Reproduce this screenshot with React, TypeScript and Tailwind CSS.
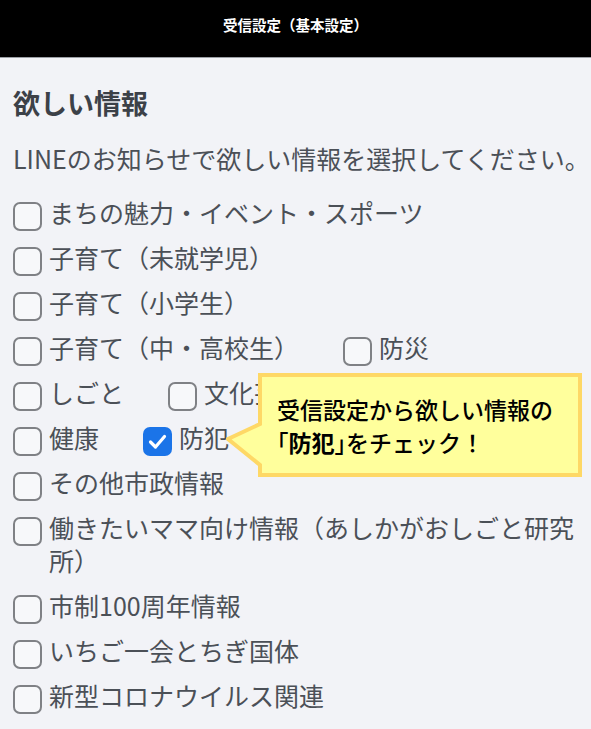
import type { ReactNode } from "react";

interface OptionProps {
  label: ReactNode;
  checked?: boolean;
  className?: string;
}

function Box({ checked }: { checked?: boolean }) {
  if (checked) {
    return (
      <span className="mb-[-2px] mt-[6px] flex h-[29px] w-[29px] shrink-0 items-center justify-center rounded-[7px] bg-[#1b74e8]">
        <svg width="29" height="29" viewBox="0 0 29 29">
          <path d="M7.5 15 L12.5 20 L21.5 9.5" fill="none" stroke="#fff" strokeWidth="3.2" strokeLinecap="round" strokeLinejoin="round" />
        </svg>
      </span>
    );
  }
  return <span className="mb-[-2px] mt-[6px] block h-[29px] w-[29px] shrink-0 rounded-[7px] border-[2.5px] border-[#7f8185] bg-[#f7f8fa]"></span>;
}

function Option({ label, checked, className }: OptionProps) {
  return (
    <label className={`flex items-start gap-[7px] ${className ?? ""}`}>
      <Box checked={checked} />
      <span className="text-[25px] leading-[33px] text-[#4b5057]">{label}</span>
    </label>
  );
}

// rows as they wrap on the phone screen
const rows: OptionProps[][] = [
  [{ label: "まちの魅力・イベント・スポーツ" }],
  [{ label: "子育て（未就学児）" }],
  [{ label: "子育て（小学生）" }],
  [{ label: "子育て（中・高校生）", className: "w-[330px]" }, { label: "防災" }],
  [{ label: "しごと", className: "w-[155px]" }, { label: "文化芸術" }],
  [{ label: "健康", className: "w-[130px]" }, { label: "防犯", checked: true }],
  [{ label: "その他市政情報" }],
  [{ label: "働きたいママ向け情報（あしかがおしごと研究所）" }],
  [{ label: "市制100周年情報" }],
  [{ label: "いちご一会とちぎ国体" }],
  [{ label: "新型コロナウイルス関連" }],
];

export default function App() {
  return (
    <div className="relative min-h-[729px] overflow-hidden bg-[#f2f3f7] font-['Noto_Sans_CJK_JP',sans-serif]">
      <header className="flex h-[58px] items-center justify-center border-b border-[#9b9fa5] bg-black pb-[7px]">
        <h1 className="text-[14.5px] font-bold text-white">受信設定（基本設定）</h1>
      </header>

      <main className="px-[13px] pt-[24px]">
        <h2 className="text-[27px] font-bold leading-[42px] text-[#3c4148]">欲しい情報</h2>
        <p className="mt-[18px] whitespace-nowrap text-[25px] leading-[33px] text-[#4b5057]">
          LINEのお知らせで欲しい情報を選択してください。
        </p>

        <div className="mt-[21px] flex flex-col gap-[12px]">
          {rows.map((row, i) => (
            <div key={i} className="flex">
              {row.map((opt, j) => (
                <Option key={j} {...opt} />
              ))}
            </div>
          ))}
        </div>
      </main>

      {/* callout */}
      <div className="absolute left-[226px] top-[371px] h-[110px] w-[360px]">
        <svg width="360" height="110" viewBox="0 0 360 110" className="absolute inset-0">
          <path d="M34 4 H354 V104 H34 V94 L2 68 L34 53 Z" fill="#ffff9c" stroke="#fed866" strokeWidth="4" strokeLinejoin="miter" />
        </svg>
        <div className="absolute left-[51px] top-[22px] text-[23px] font-medium leading-[33px] text-black">
          <div>受信設定から欲しい情報の</div>
          <div>
            <span className="[font-feature-settings:'halt']">「</span>
            <span className="font-bold">防犯</span>
            <span className="[font-feature-settings:'halt']">」</span>をチェック！
          </div>
        </div>
      </div>
    </div>
  );
}
